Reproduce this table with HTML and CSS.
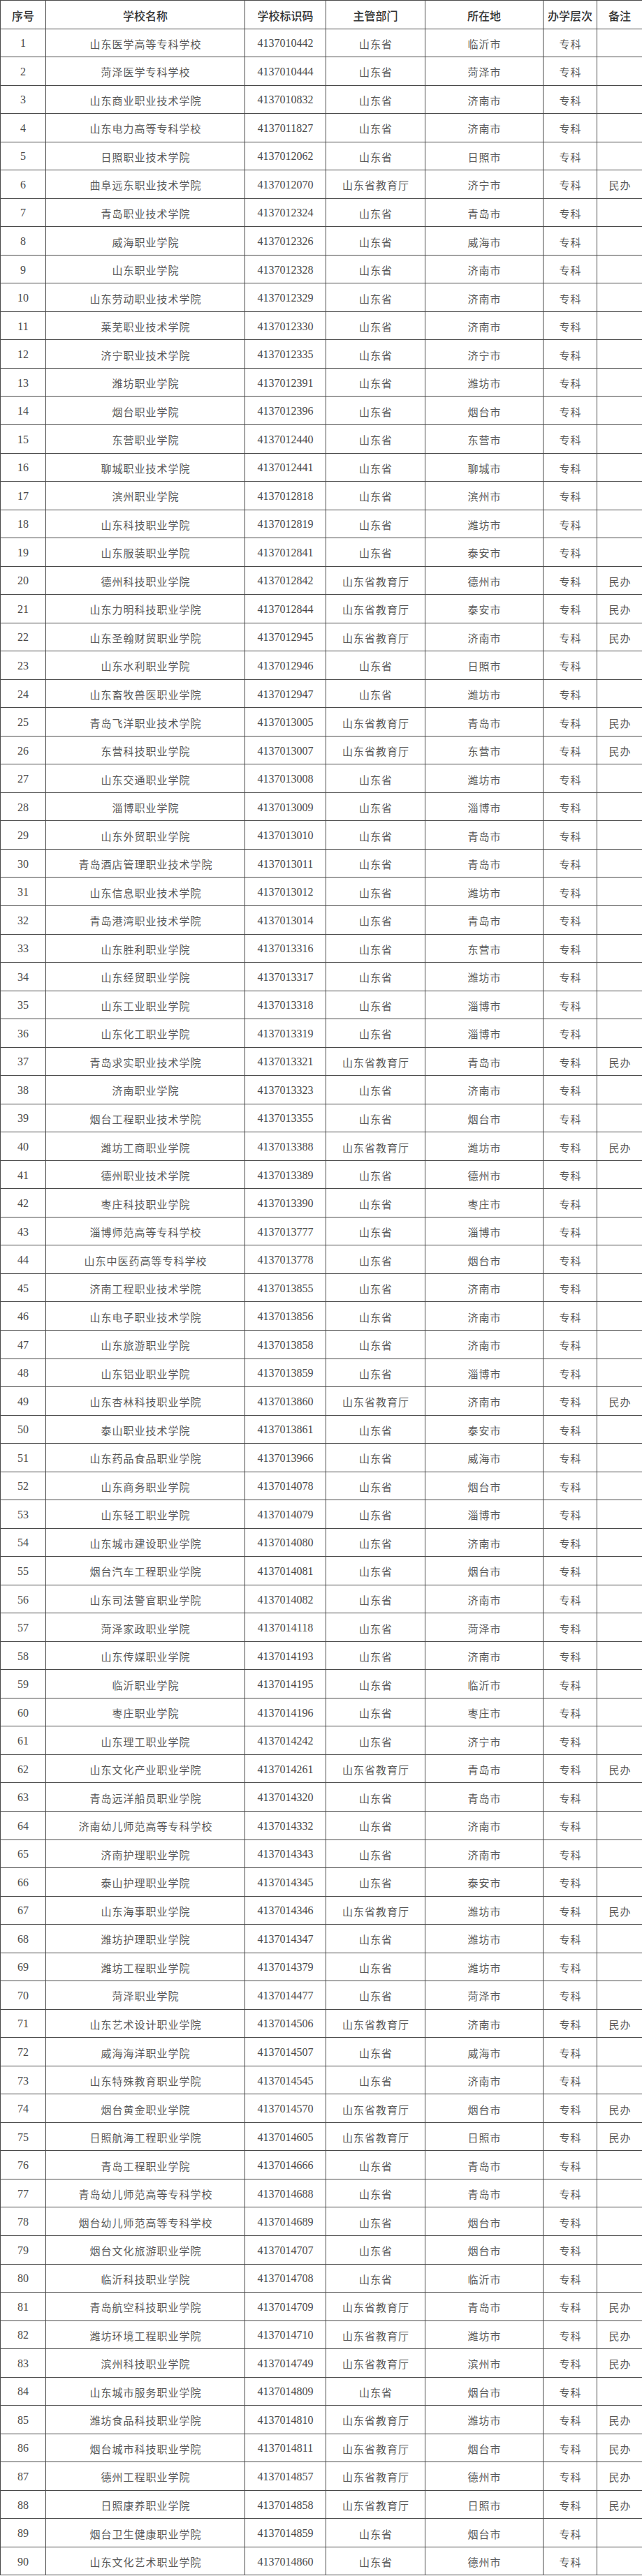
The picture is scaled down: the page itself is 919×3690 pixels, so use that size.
FILE: index.html
```html
<!DOCTYPE html>
<html lang="zh-CN">
<head>
<meta charset="utf-8">
<title>山东省高职（专科）学校名单</title>
<link rel="stylesheet" href="styles.css">
</head>
<body>
<table class="list">
<colgroup>
<col class="c-no"><col class="c-name"><col class="c-code"><col class="c-dept"><col class="c-city"><col class="c-level"><col class="c-note">
</colgroup>
<thead>
<tr><th>序号</th><th>学校名称</th><th>学校标识码</th><th>主管部门</th><th>所在地</th><th>办学层次</th><th>备注</th></tr>
</thead>
<tbody>
<tr><td class="num">1</td><td>山东医学高等专科学校</td><td class="num">4137010442</td><td>山东省</td><td>临沂市</td><td>专科</td><td></td></tr>
<tr><td class="num">2</td><td>菏泽医学专科学校</td><td class="num">4137010444</td><td>山东省</td><td>菏泽市</td><td>专科</td><td></td></tr>
<tr><td class="num">3</td><td>山东商业职业技术学院</td><td class="num">4137010832</td><td>山东省</td><td>济南市</td><td>专科</td><td></td></tr>
<tr><td class="num">4</td><td>山东电力高等专科学校</td><td class="num">4137011827</td><td>山东省</td><td>济南市</td><td>专科</td><td></td></tr>
<tr><td class="num">5</td><td>日照职业技术学院</td><td class="num">4137012062</td><td>山东省</td><td>日照市</td><td>专科</td><td></td></tr>
<tr><td class="num">6</td><td>曲阜远东职业技术学院</td><td class="num">4137012070</td><td>山东省教育厅</td><td>济宁市</td><td>专科</td><td>民办</td></tr>
<tr><td class="num">7</td><td>青岛职业技术学院</td><td class="num">4137012324</td><td>山东省</td><td>青岛市</td><td>专科</td><td></td></tr>
<tr><td class="num">8</td><td>威海职业学院</td><td class="num">4137012326</td><td>山东省</td><td>威海市</td><td>专科</td><td></td></tr>
<tr><td class="num">9</td><td>山东职业学院</td><td class="num">4137012328</td><td>山东省</td><td>济南市</td><td>专科</td><td></td></tr>
<tr><td class="num">10</td><td>山东劳动职业技术学院</td><td class="num">4137012329</td><td>山东省</td><td>济南市</td><td>专科</td><td></td></tr>
<tr><td class="num">11</td><td>莱芜职业技术学院</td><td class="num">4137012330</td><td>山东省</td><td>济南市</td><td>专科</td><td></td></tr>
<tr><td class="num">12</td><td>济宁职业技术学院</td><td class="num">4137012335</td><td>山东省</td><td>济宁市</td><td>专科</td><td></td></tr>
<tr><td class="num">13</td><td>潍坊职业学院</td><td class="num">4137012391</td><td>山东省</td><td>潍坊市</td><td>专科</td><td></td></tr>
<tr><td class="num">14</td><td>烟台职业学院</td><td class="num">4137012396</td><td>山东省</td><td>烟台市</td><td>专科</td><td></td></tr>
<tr><td class="num">15</td><td>东营职业学院</td><td class="num">4137012440</td><td>山东省</td><td>东营市</td><td>专科</td><td></td></tr>
<tr><td class="num">16</td><td>聊城职业技术学院</td><td class="num">4137012441</td><td>山东省</td><td>聊城市</td><td>专科</td><td></td></tr>
<tr><td class="num">17</td><td>滨州职业学院</td><td class="num">4137012818</td><td>山东省</td><td>滨州市</td><td>专科</td><td></td></tr>
<tr><td class="num">18</td><td>山东科技职业学院</td><td class="num">4137012819</td><td>山东省</td><td>潍坊市</td><td>专科</td><td></td></tr>
<tr><td class="num">19</td><td>山东服装职业学院</td><td class="num">4137012841</td><td>山东省</td><td>泰安市</td><td>专科</td><td></td></tr>
<tr><td class="num">20</td><td>德州科技职业学院</td><td class="num">4137012842</td><td>山东省教育厅</td><td>德州市</td><td>专科</td><td>民办</td></tr>
<tr><td class="num">21</td><td>山东力明科技职业学院</td><td class="num">4137012844</td><td>山东省教育厅</td><td>泰安市</td><td>专科</td><td>民办</td></tr>
<tr><td class="num">22</td><td>山东圣翰财贸职业学院</td><td class="num">4137012945</td><td>山东省教育厅</td><td>济南市</td><td>专科</td><td>民办</td></tr>
<tr><td class="num">23</td><td>山东水利职业学院</td><td class="num">4137012946</td><td>山东省</td><td>日照市</td><td>专科</td><td></td></tr>
<tr><td class="num">24</td><td>山东畜牧兽医职业学院</td><td class="num">4137012947</td><td>山东省</td><td>潍坊市</td><td>专科</td><td></td></tr>
<tr><td class="num">25</td><td>青岛飞洋职业技术学院</td><td class="num">4137013005</td><td>山东省教育厅</td><td>青岛市</td><td>专科</td><td>民办</td></tr>
<tr><td class="num">26</td><td>东营科技职业学院</td><td class="num">4137013007</td><td>山东省教育厅</td><td>东营市</td><td>专科</td><td>民办</td></tr>
<tr><td class="num">27</td><td>山东交通职业学院</td><td class="num">4137013008</td><td>山东省</td><td>潍坊市</td><td>专科</td><td></td></tr>
<tr><td class="num">28</td><td>淄博职业学院</td><td class="num">4137013009</td><td>山东省</td><td>淄博市</td><td>专科</td><td></td></tr>
<tr><td class="num">29</td><td>山东外贸职业学院</td><td class="num">4137013010</td><td>山东省</td><td>青岛市</td><td>专科</td><td></td></tr>
<tr><td class="num">30</td><td>青岛酒店管理职业技术学院</td><td class="num">4137013011</td><td>山东省</td><td>青岛市</td><td>专科</td><td></td></tr>
<tr><td class="num">31</td><td>山东信息职业技术学院</td><td class="num">4137013012</td><td>山东省</td><td>潍坊市</td><td>专科</td><td></td></tr>
<tr><td class="num">32</td><td>青岛港湾职业技术学院</td><td class="num">4137013014</td><td>山东省</td><td>青岛市</td><td>专科</td><td></td></tr>
<tr><td class="num">33</td><td>山东胜利职业学院</td><td class="num">4137013316</td><td>山东省</td><td>东营市</td><td>专科</td><td></td></tr>
<tr><td class="num">34</td><td>山东经贸职业学院</td><td class="num">4137013317</td><td>山东省</td><td>潍坊市</td><td>专科</td><td></td></tr>
<tr><td class="num">35</td><td>山东工业职业学院</td><td class="num">4137013318</td><td>山东省</td><td>淄博市</td><td>专科</td><td></td></tr>
<tr><td class="num">36</td><td>山东化工职业学院</td><td class="num">4137013319</td><td>山东省</td><td>淄博市</td><td>专科</td><td></td></tr>
<tr><td class="num">37</td><td>青岛求实职业技术学院</td><td class="num">4137013321</td><td>山东省教育厅</td><td>青岛市</td><td>专科</td><td>民办</td></tr>
<tr><td class="num">38</td><td>济南职业学院</td><td class="num">4137013323</td><td>山东省</td><td>济南市</td><td>专科</td><td></td></tr>
<tr><td class="num">39</td><td>烟台工程职业技术学院</td><td class="num">4137013355</td><td>山东省</td><td>烟台市</td><td>专科</td><td></td></tr>
<tr><td class="num">40</td><td>潍坊工商职业学院</td><td class="num">4137013388</td><td>山东省教育厅</td><td>潍坊市</td><td>专科</td><td>民办</td></tr>
<tr><td class="num">41</td><td>德州职业技术学院</td><td class="num">4137013389</td><td>山东省</td><td>德州市</td><td>专科</td><td></td></tr>
<tr><td class="num">42</td><td>枣庄科技职业学院</td><td class="num">4137013390</td><td>山东省</td><td>枣庄市</td><td>专科</td><td></td></tr>
<tr><td class="num">43</td><td>淄博师范高等专科学校</td><td class="num">4137013777</td><td>山东省</td><td>淄博市</td><td>专科</td><td></td></tr>
<tr><td class="num">44</td><td>山东中医药高等专科学校</td><td class="num">4137013778</td><td>山东省</td><td>烟台市</td><td>专科</td><td></td></tr>
<tr><td class="num">45</td><td>济南工程职业技术学院</td><td class="num">4137013855</td><td>山东省</td><td>济南市</td><td>专科</td><td></td></tr>
<tr><td class="num">46</td><td>山东电子职业技术学院</td><td class="num">4137013856</td><td>山东省</td><td>济南市</td><td>专科</td><td></td></tr>
<tr><td class="num">47</td><td>山东旅游职业学院</td><td class="num">4137013858</td><td>山东省</td><td>济南市</td><td>专科</td><td></td></tr>
<tr><td class="num">48</td><td>山东铝业职业学院</td><td class="num">4137013859</td><td>山东省</td><td>淄博市</td><td>专科</td><td></td></tr>
<tr><td class="num">49</td><td>山东杏林科技职业学院</td><td class="num">4137013860</td><td>山东省教育厅</td><td>济南市</td><td>专科</td><td>民办</td></tr>
<tr><td class="num">50</td><td>泰山职业技术学院</td><td class="num">4137013861</td><td>山东省</td><td>泰安市</td><td>专科</td><td></td></tr>
<tr><td class="num">51</td><td>山东药品食品职业学院</td><td class="num">4137013966</td><td>山东省</td><td>威海市</td><td>专科</td><td></td></tr>
<tr><td class="num">52</td><td>山东商务职业学院</td><td class="num">4137014078</td><td>山东省</td><td>烟台市</td><td>专科</td><td></td></tr>
<tr><td class="num">53</td><td>山东轻工职业学院</td><td class="num">4137014079</td><td>山东省</td><td>淄博市</td><td>专科</td><td></td></tr>
<tr><td class="num">54</td><td>山东城市建设职业学院</td><td class="num">4137014080</td><td>山东省</td><td>济南市</td><td>专科</td><td></td></tr>
<tr><td class="num">55</td><td>烟台汽车工程职业学院</td><td class="num">4137014081</td><td>山东省</td><td>烟台市</td><td>专科</td><td></td></tr>
<tr><td class="num">56</td><td>山东司法警官职业学院</td><td class="num">4137014082</td><td>山东省</td><td>济南市</td><td>专科</td><td></td></tr>
<tr><td class="num">57</td><td>菏泽家政职业学院</td><td class="num">4137014118</td><td>山东省</td><td>菏泽市</td><td>专科</td><td></td></tr>
<tr><td class="num">58</td><td>山东传媒职业学院</td><td class="num">4137014193</td><td>山东省</td><td>济南市</td><td>专科</td><td></td></tr>
<tr><td class="num">59</td><td>临沂职业学院</td><td class="num">4137014195</td><td>山东省</td><td>临沂市</td><td>专科</td><td></td></tr>
<tr><td class="num">60</td><td>枣庄职业学院</td><td class="num">4137014196</td><td>山东省</td><td>枣庄市</td><td>专科</td><td></td></tr>
<tr><td class="num">61</td><td>山东理工职业学院</td><td class="num">4137014242</td><td>山东省</td><td>济宁市</td><td>专科</td><td></td></tr>
<tr><td class="num">62</td><td>山东文化产业职业学院</td><td class="num">4137014261</td><td>山东省教育厅</td><td>青岛市</td><td>专科</td><td>民办</td></tr>
<tr><td class="num">63</td><td>青岛远洋船员职业学院</td><td class="num">4137014320</td><td>山东省</td><td>青岛市</td><td>专科</td><td></td></tr>
<tr><td class="num">64</td><td>济南幼儿师范高等专科学校</td><td class="num">4137014332</td><td>山东省</td><td>济南市</td><td>专科</td><td></td></tr>
<tr><td class="num">65</td><td>济南护理职业学院</td><td class="num">4137014343</td><td>山东省</td><td>济南市</td><td>专科</td><td></td></tr>
<tr><td class="num">66</td><td>泰山护理职业学院</td><td class="num">4137014345</td><td>山东省</td><td>泰安市</td><td>专科</td><td></td></tr>
<tr><td class="num">67</td><td>山东海事职业学院</td><td class="num">4137014346</td><td>山东省教育厅</td><td>潍坊市</td><td>专科</td><td>民办</td></tr>
<tr><td class="num">68</td><td>潍坊护理职业学院</td><td class="num">4137014347</td><td>山东省</td><td>潍坊市</td><td>专科</td><td></td></tr>
<tr><td class="num">69</td><td>潍坊工程职业学院</td><td class="num">4137014379</td><td>山东省</td><td>潍坊市</td><td>专科</td><td></td></tr>
<tr><td class="num">70</td><td>菏泽职业学院</td><td class="num">4137014477</td><td>山东省</td><td>菏泽市</td><td>专科</td><td></td></tr>
<tr><td class="num">71</td><td>山东艺术设计职业学院</td><td class="num">4137014506</td><td>山东省教育厅</td><td>济南市</td><td>专科</td><td>民办</td></tr>
<tr><td class="num">72</td><td>威海海洋职业学院</td><td class="num">4137014507</td><td>山东省</td><td>威海市</td><td>专科</td><td></td></tr>
<tr><td class="num">73</td><td>山东特殊教育职业学院</td><td class="num">4137014545</td><td>山东省</td><td>济南市</td><td>专科</td><td></td></tr>
<tr><td class="num">74</td><td>烟台黄金职业学院</td><td class="num">4137014570</td><td>山东省教育厅</td><td>烟台市</td><td>专科</td><td>民办</td></tr>
<tr><td class="num">75</td><td>日照航海工程职业学院</td><td class="num">4137014605</td><td>山东省教育厅</td><td>日照市</td><td>专科</td><td>民办</td></tr>
<tr><td class="num">76</td><td>青岛工程职业学院</td><td class="num">4137014666</td><td>山东省</td><td>青岛市</td><td>专科</td><td></td></tr>
<tr><td class="num">77</td><td>青岛幼儿师范高等专科学校</td><td class="num">4137014688</td><td>山东省</td><td>青岛市</td><td>专科</td><td></td></tr>
<tr><td class="num">78</td><td>烟台幼儿师范高等专科学校</td><td class="num">4137014689</td><td>山东省</td><td>烟台市</td><td>专科</td><td></td></tr>
<tr><td class="num">79</td><td>烟台文化旅游职业学院</td><td class="num">4137014707</td><td>山东省</td><td>烟台市</td><td>专科</td><td></td></tr>
<tr><td class="num">80</td><td>临沂科技职业学院</td><td class="num">4137014708</td><td>山东省</td><td>临沂市</td><td>专科</td><td></td></tr>
<tr><td class="num">81</td><td>青岛航空科技职业学院</td><td class="num">4137014709</td><td>山东省教育厅</td><td>青岛市</td><td>专科</td><td>民办</td></tr>
<tr><td class="num">82</td><td>潍坊环境工程职业学院</td><td class="num">4137014710</td><td>山东省教育厅</td><td>潍坊市</td><td>专科</td><td>民办</td></tr>
<tr><td class="num">83</td><td>滨州科技职业学院</td><td class="num">4137014749</td><td>山东省教育厅</td><td>滨州市</td><td>专科</td><td>民办</td></tr>
<tr><td class="num">84</td><td>山东城市服务职业学院</td><td class="num">4137014809</td><td>山东省</td><td>烟台市</td><td>专科</td><td></td></tr>
<tr><td class="num">85</td><td>潍坊食品科技职业学院</td><td class="num">4137014810</td><td>山东省教育厅</td><td>潍坊市</td><td>专科</td><td>民办</td></tr>
<tr><td class="num">86</td><td>烟台城市科技职业学院</td><td class="num">4137014811</td><td>山东省教育厅</td><td>烟台市</td><td>专科</td><td>民办</td></tr>
<tr><td class="num">87</td><td>德州工程职业学院</td><td class="num">4137014857</td><td>山东省教育厅</td><td>德州市</td><td>专科</td><td>民办</td></tr>
<tr><td class="num">88</td><td>日照康养职业学院</td><td class="num">4137014858</td><td>山东省教育厅</td><td>日照市</td><td>专科</td><td>民办</td></tr>
<tr><td class="num">89</td><td>烟台卫生健康职业学院</td><td class="num">4137014859</td><td>山东省</td><td>烟台市</td><td>专科</td><td></td></tr>
<tr><td class="num">90</td><td>山东文化艺术职业学院</td><td class="num">4137014860</td><td>山东省</td><td>德州市</td><td>专科</td><td></td></tr>
</tbody>
</table>
</body>
</html>
```

FILE: styles.css
```css
html, body {
  margin: 0;
  padding: 0;
  background: #ffffff;
}

.list {
  width: 919px;
  border-collapse: collapse;
  table-layout: fixed;
}

.c-no { width: 65px; }
.c-name { width: 285px; }
.c-code { width: 116px; }
.c-dept { width: 142px; }
.c-city { width: 169px; }
.c-level { width: 77px; }
.c-note { width: 65px; }

.list th,
.list td {
  border: 1px solid #4a4a4a;
  padding: 0;
  text-align: center;
  vertical-align: middle;
  white-space: nowrap;
  overflow: hidden;
}

.list tr {
  height: 40.54px;
}

.list th {
  font-family: "Noto Sans CJK SC", "Noto Sans", sans-serif;
  font-size: 16px;
  font-weight: 500;
  color: #333333;
  padding-top: 2px;
}

.list td {
  font-family: "Liberation Serif", "Noto Sans CJK SC", serif;
  font-size: 15px;
  letter-spacing: 1px;
  padding-left: 1px;
  color: #585858;
  padding-top: 2px;
}

.list td.num {
  font-size: 16px;
  letter-spacing: 0;
  padding-left: 0;
  color: #4a4a4a;
}
```
